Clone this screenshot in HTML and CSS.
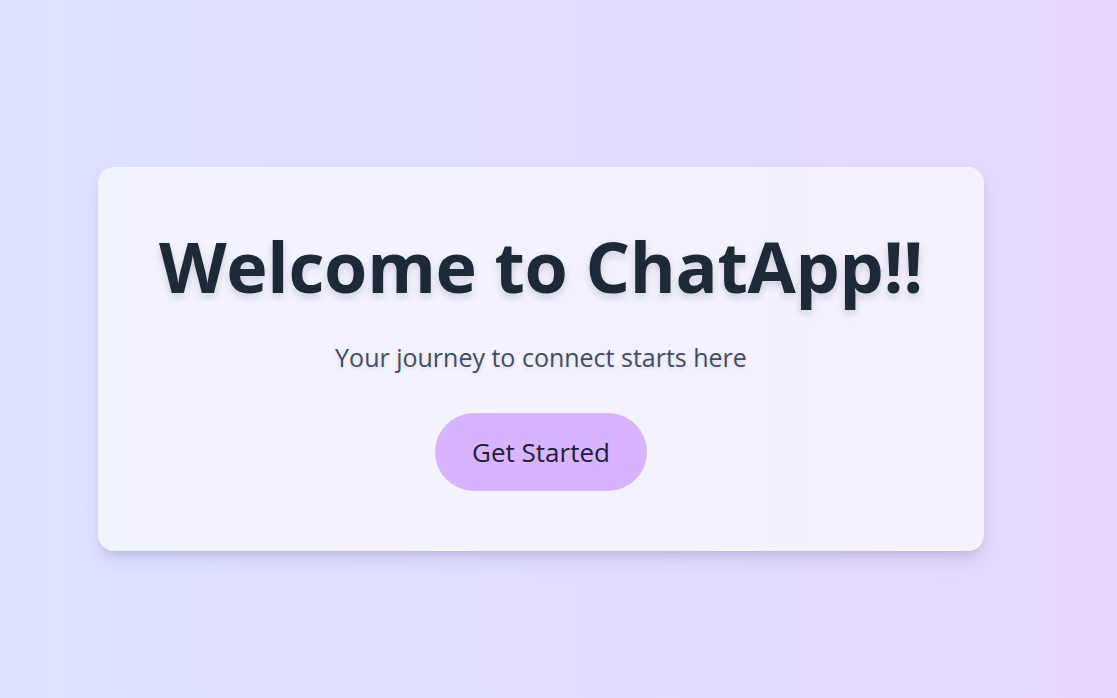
FILE: index.html
```html
<!DOCTYPE html>
<html lang="en">
<head>
<meta charset="utf-8">
<title>ChatApp</title>
<link rel="stylesheet" href="styles.css">
</head>
<body>
<main class="page">
  <section class="card">
    <h1 class="title">Welcome to ChatApp!!</h1>
    <p class="subtitle">Your journey to connect starts here</p>
    <button class="cta" type="button">Get Started</button>
  </section>
</main>
</body>
</html>
```
FILE: styles.css
```css
* { box-sizing: border-box; }
html, body { margin: 0; height: 100%; }
body {
  font-family: "Open Sans", "Noto Sans", "Liberation Sans", sans-serif;
  background: linear-gradient(to right, #dee4ff, #e6d8fd);
}
.page {
  min-height: 698px;
  display: flex;
  align-items: flex-start;
  padding: 167px 0 0 98px;
}
.card {
  width: 886px;
  height: 384px;
  background: rgba(255, 255, 255, 0.62);
  border-radius: 16px;
  box-shadow: 0 10px 20px -4px rgba(120, 110, 170, 0.28), 0 4px 8px -4px rgba(120, 110, 170, 0.2);
  display: flex;
  flex-direction: column;
  align-items: center;
  padding-top: 64px;
}
.title {
  margin: 0;
  font-size: 70px;
  line-height: 1;
  font-weight: 700;
  color: #1e2937;
  text-shadow: 0 4px 8px rgba(0, 0, 0, 0.15);
  letter-spacing: -0.3px;
}
.subtitle {
  margin: 40px 0 0;
  font-size: 25px;
  line-height: 32px;
  color: #434d60;
  text-shadow: 0 2px 4px rgba(0, 0, 0, 0.1);
}
.cta {
  margin-top: 40px;
  width: 212px;
  height: 78px;
  border: 0;
  border-radius: 39px;
  background: #d9b4fe;
  color: #1e2136;
  font-family: inherit;
  font-size: 26px;
  padding: 0;
}
```
